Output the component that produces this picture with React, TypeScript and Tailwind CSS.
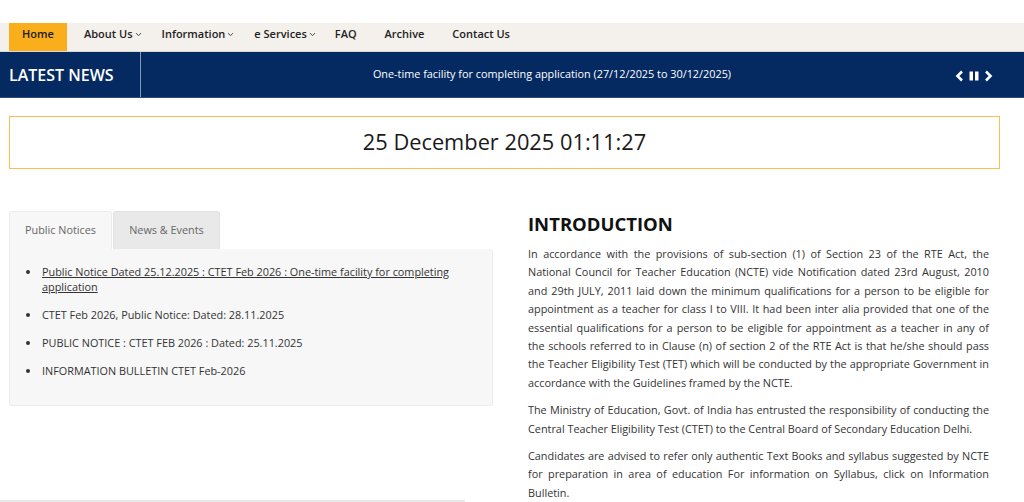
import { ChevronDown } from 'lucide-react'

const navItems = [
    { label: 'Home', active: true },
    { label: 'About Us', menu: true },
    { label: 'Information', menu: true },
    { label: 'e Services', menu: true },
    { label: 'FAQ' },
    { label: 'Archive' },
    { label: 'Contact Us' },
]

const notices = [
    { text: 'Public Notice Dated 25.12.2025 : CTET Feb 2026 : One-time facility for completing application', link: true },
    { text: 'CTET Feb 2026, Public Notice: Dated: 28.11.2025' },
    { text: 'PUBLIC NOTICE : CTET FEB 2026 : Dated: 25.11.2025' },
    { text: 'INFORMATION BULLETIN CTET Feb-2026' },
]

export default function App() {
    return (
        <div className="h-[502px] bg-white font-['Open_Sans',sans-serif] text-[#333] overflow-hidden">
            <div className="h-[23px]"></div>

            {/* main menu */}
            <nav className="h-[29px] bg-[#f4f1ed] border-b border-[#dcd9d5] pl-[9px]">
                <ul className="flex h-[28px] items-stretch">
                    {navItems.map((item) => (
                        <li
                            key={item.label}
                            className={
                                item.active
                                    ? 'flex items-center justify-center pb-[5px] bg-[#fbae1b] text-[11px] font-semibold text-[#1a1a1a] w-[58px] mr-[2px]'
                                    : item.menu
                                      ? 'flex items-center pb-[5px] pl-[15px] pr-[4px] text-[11px] font-semibold text-[#222]'
                                      : 'flex items-center pb-[5px] px-[14px] text-[11px] font-semibold text-[#222]'
                            }
                        >
                            {item.label}
                            {item.menu && <ChevronDown className="w-[9px] h-[9px] ml-[1px]" strokeWidth={2.2} />}
                        </li>
                    ))}
                </ul>
            </nav>

            {/* latest news ticker */}
            <div className="flex h-[46px] bg-[#052a62] border-b border-[#2f4b78] text-white">
                <div className="w-[141px] pl-[9px] flex items-center text-[16px] font-semibold border-r border-[#8a9ab5]">
                    LATEST NEWS
                </div>
                <div className="flex-1 flex items-center justify-center text-[10.85px] pl-[8px]">
                    One-time facility for completing application (27/12/2025 to 30/12/2025)
                </div>
                <div className="w-[69px] flex items-center gap-[5px] pt-[3px]">
                    <svg width="9" height="12" viewBox="0 0 9 12" fill="none" stroke="white" strokeWidth="2.6">
                        <path d="M7 1.5 2.5 6 7 10.5" />
                    </svg>
                    <svg width="10" height="10" viewBox="0 0 10 10" fill="white">
                        <rect x="0.5" y="0.5" width="3.5" height="9" />
                        <rect x="6" y="0.5" width="3.5" height="9" />
                    </svg>
                    <svg width="9" height="12" viewBox="0 0 9 12" fill="none" stroke="white" strokeWidth="2.6">
                        <path d="M2 1.5 6.5 6 2 10.5" />
                    </svg>
                </div>
            </div>

            {/* clock */}
            <div className="mt-[18px] ml-[9px] w-[991px] h-[53px] border border-[color:#fbbf4f] flex items-center justify-center text-[21.8px] text-[#1a1a1a]">
                25 December 2025 01:11:27
            </div>

            <div className="flex mt-[42px] pl-[9px]">
                {/* notice tabs */}
                <div className="w-[484px]">
                    <div className="flex text-[10.85px] text-[#666]">
                        <div className="w-[103px] h-[38px] flex items-center justify-center bg-[#f7f7f7] border border-b-0 border-[#ececec] rounded-t-[3px]">
                            Public Notices
                        </div>
                        <div className="w-[107px] h-[38px] ml-[1px] flex items-center justify-center bg-[#e9e9e9] border border-b-0 border-[#e2e2e2] rounded-t-[3px]">
                            News &amp; Events
                        </div>
                    </div>
                    <div className="bg-[#f7f7f7] border border-t-0 border-[#ececec] rounded-b-[3px] rounded-tr-[3px] pt-[15px] pb-[27px] pl-[31px] pr-[30px]">
                        <ul className="list-disc text-[10.85px] leading-[15px] text-[#333]">
                            {notices.map((n) => (
                                <li key={n.text} className="mb-[13px] last:mb-0 pl-[1px]">
                                    {n.link ? <a className="underline">{n.text}</a> : n.text}
                                </li>
                            ))}
                        </ul>
                    </div>
                    <div className="mt-[94px] -ml-[9px] w-[465px] h-[2px] bg-[#e8e8e8]"></div>
                </div>

                {/* introduction */}
                <div className="ml-[35px] w-[461px] text-[10.85px] leading-[18.4px] text-[#333]">
                    <h2 className="text-[18.5px] font-bold text-[#111] leading-[28px] mt-[-1px] mb-[7px]">INTRODUCTION</h2>
                    <p className="text-justify mb-[9px]">
                        In accordance with the provisions of sub-section (1) of Section 23 of the RTE Act, the National Council for Teacher Education (NCTE) vide Notification dated 23rd August, 2010 and 29th JULY, 2011 laid down the minimum qualifications for a person to be eligible for appointment as a teacher for class I to VIII. It had been inter alia provided that one of the essential qualifications for a person to be eligible for appointment as a teacher in any of the schools referred to in Clause (n) of section 2 of the RTE Act is that he/she should pass the Teacher Eligibility Test (TET) which will be conducted by the appropriate Government in accordance with the Guidelines framed by the NCTE.
                    </p>
                    <p className="text-justify mb-[9px]">
                        The Ministry of Education, Govt. of India has entrusted the responsibility of conducting the Central Teacher Eligibility Test (CTET) to the Central Board of Secondary Education Delhi.
                    </p>
                    <p className="text-justify">
                        Candidates are advised to refer only authentic Text Books and syllabus suggested by NCTE for preparation in area of education For information on Syllabus, click on Information Bulletin.
                    </p>
                </div>
            </div>
        </div>
    )
}
